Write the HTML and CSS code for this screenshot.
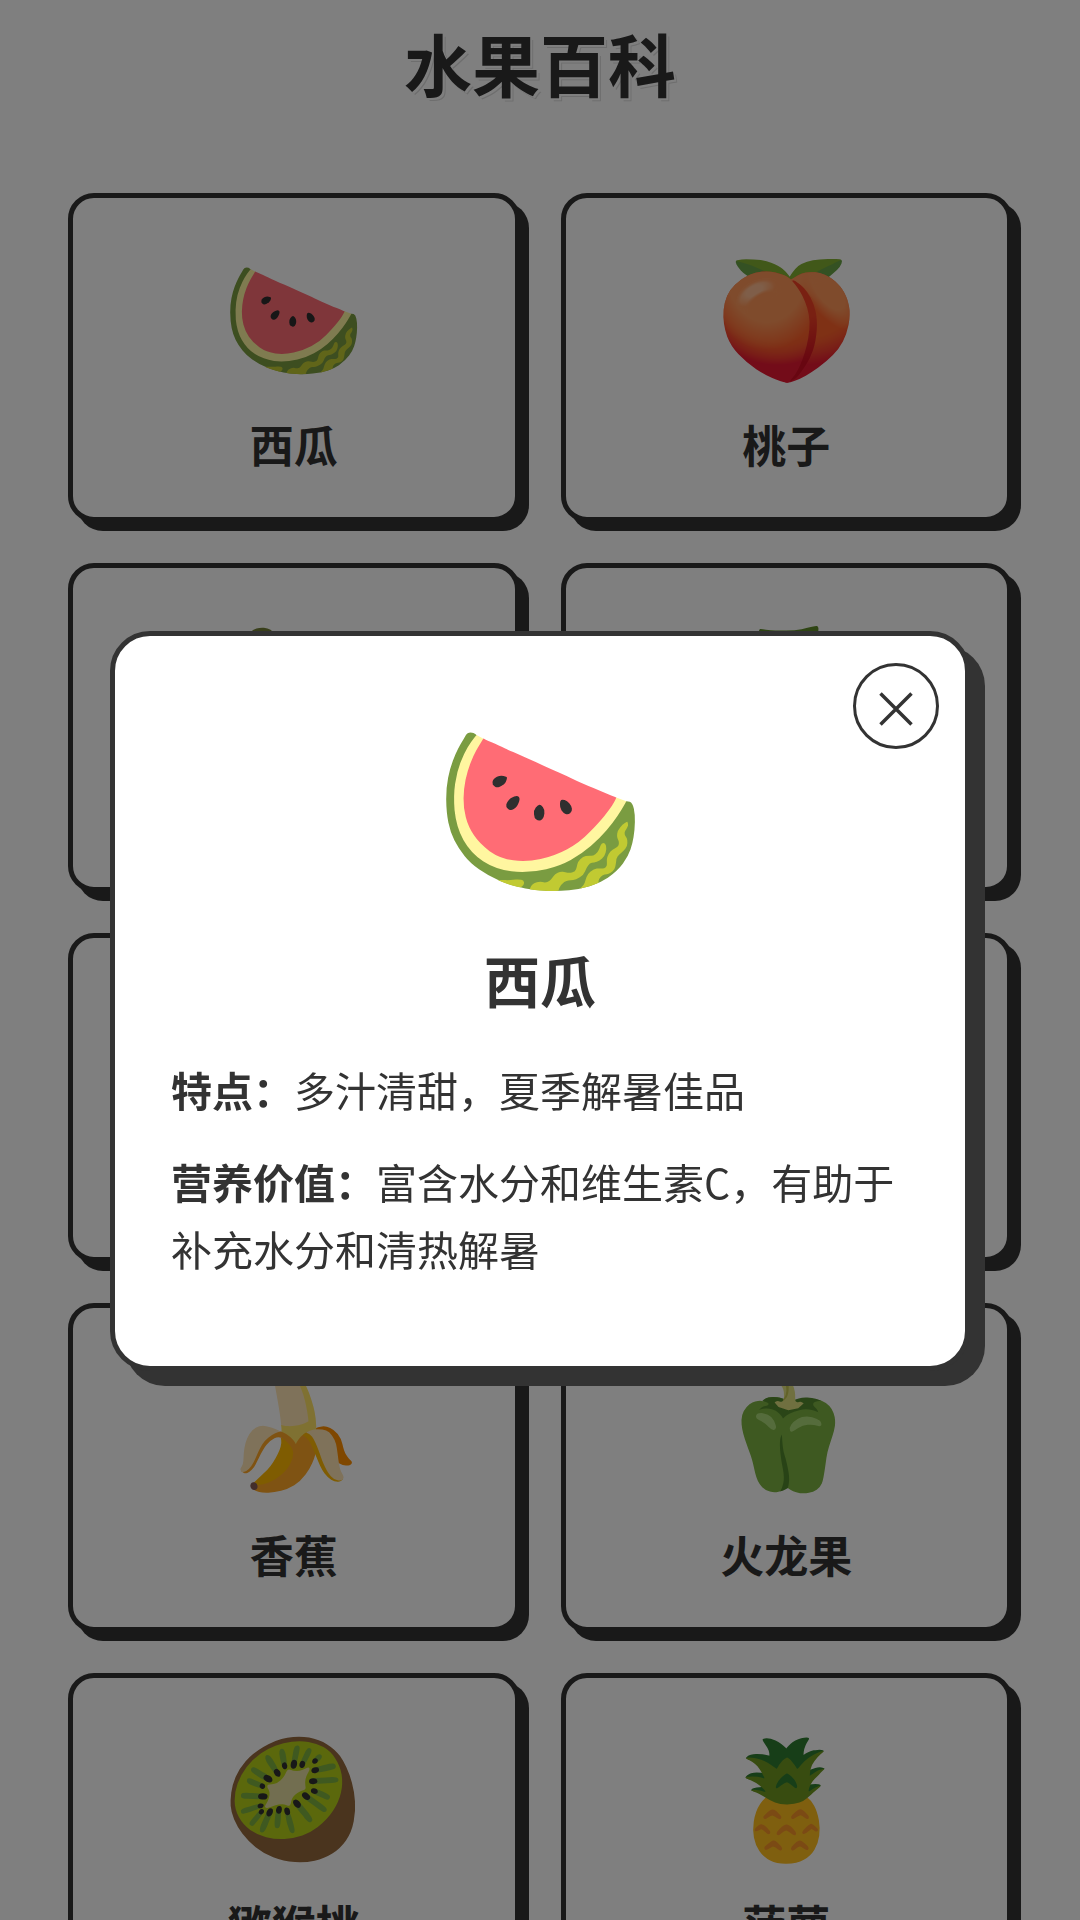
FILE: index.html
```
<!DOCTYPE html>
<html lang="zh-CN">
<head>
    <meta charset="UTF-8">
    <meta name="viewport" content="width=device-width, initial-scale=1.0">
    <title>水果百科</title>
    <link rel="stylesheet" href="styles.css">
</head>
<body>
    <h1 class="page-title">水果百科</h1>

    <main class="fruit-grid">
        <button class="fruit-card">
            <span class="fruit-emoji">🍉</span>
            <span class="fruit-name">西瓜</span>
        </button>
        <button class="fruit-card">
            <span class="fruit-emoji">🍑</span>
            <span class="fruit-name">桃子</span>
        </button>
        <button class="fruit-card">
            <span class="fruit-emoji">🍇</span>
            <span class="fruit-name">葡萄</span>
        </button>
        <button class="fruit-card">
            <span class="fruit-emoji">🍈</span>
            <span class="fruit-name">哈密瓜</span>
        </button>
        <button class="fruit-card">
            <span class="fruit-emoji">🍎</span>
            <span class="fruit-name">苹果</span>
        </button>
        <button class="fruit-card">
            <span class="fruit-emoji">🍊</span>
            <span class="fruit-name">橙子</span>
        </button>
        <button class="fruit-card">
            <span class="fruit-emoji">🍌</span>
            <span class="fruit-name">香蕉</span>
        </button>
        <button class="fruit-card">
            <span class="fruit-emoji">🫑</span>
            <span class="fruit-name">火龙果</span>
        </button>
        <button class="fruit-card">
            <span class="fruit-emoji">🥝</span>
            <span class="fruit-name">猕猴桃</span>
        </button>
        <button class="fruit-card">
            <span class="fruit-emoji">🍍</span>
            <span class="fruit-name">菠萝</span>
        </button>
    </main>

    <!-- 详情弹窗 -->
    <div class="overlay" id="overlay">
        <div class="modal" role="dialog" aria-labelledby="modal-name">
            <button class="close-btn" aria-label="关闭" onclick="closeModal()">
                <svg class="close-icon" viewBox="0 0 34 34">
                    <path d="M1.5 1.5 L32.5 32.5 M32.5 1.5 L1.5 32.5"/>
                </svg>
            </button>
            <div class="modal-emoji">🍉</div>
            <h2 class="modal-name" id="modal-name">西瓜</h2>
            <p class="modal-text"><strong>特点：</strong>多汁清甜，夏季解暑佳品</p>
            <p class="modal-text"><strong>营养价值：</strong>富含水分和维生素C，有助于补充水分和清热解暑</p>
        </div>
    </div>

    <script>
        function closeModal() {
            document.getElementById('overlay').style.display = 'none';
            document.body.style.overflow = 'auto';
        }
    </script>
</body>
</html>
```
FILE: styles.css
```
* {
    box-sizing: border-box;
}
body {
    margin: 0;
    padding: 13px 68px 58px;
    background-color: #fff;
    color: #333;
    font-family: "Noto Sans CJK SC", sans-serif;
    overflow: hidden;
}
.page-title {
    margin: 0 0 80px;
    font-size: 68px;
    line-height: 100px;
    text-align: center;
    text-shadow: 2px 2px 0 #fff, 3px 3px 0 #ddd;
}
.fruit-grid {
    display: grid;
    grid-template-columns: repeat(2, 1fr);
    gap: 41px;
}
.fruit-card {
    display: flex;
    flex-direction: column;
    align-items: center;
    gap: 20px;
    padding: 33px 20px 38px;
    border: 5px solid #333;
    border-radius: 26px;
    background: #fff;
    box-shadow: 9px 9px 0 #333;
    color: #333;
    font-family: inherit;
    cursor: pointer;
}
.fruit-emoji {
    font-size: 115px;
    line-height: 158px;
}
.fruit-name {
    font-size: 44px;
    font-weight: bold;
    line-height: 70px;
}
.overlay {
    position: fixed;
    inset: 0;
    display: flex;
    justify-content: center;
    align-items: center;
    padding: 82px 110px 0;
    background: rgba(0, 0, 0, 0.5);
}
.modal {
    position: relative;
    width: 100%;
    padding: 40px 56px 59px;
    border: 5px solid #333;
    border-radius: 40px;
    background: #fff;
    box-shadow: 15px 15px 0 #333;
}
.close-btn {
    position: absolute;
    top: 27px;
    right: 26px;
    display: flex;
    justify-content: center;
    align-items: center;
    width: 86px;
    height: 86px;
    padding: 6px 0 0;
    border: 3px solid #333;
    border-radius: 50%;
    background: #fff;
    cursor: pointer;
}
.close-icon {
    width: 34px;
    height: 34px;
    fill: none;
    stroke: #333;
    stroke-width: 3.5;
}
.modal-emoji {
    margin-bottom: 23px;
    font-size: 171px;
    line-height: 240px;
    text-align: center;
}
.modal-name {
    margin: 0 0 37px;
    font-size: 56px;
    line-height: 80px;
    text-align: center;
}
.modal-text {
    margin: 0 0 25px;
    font-size: 41px;
    line-height: 67px;
}
```
